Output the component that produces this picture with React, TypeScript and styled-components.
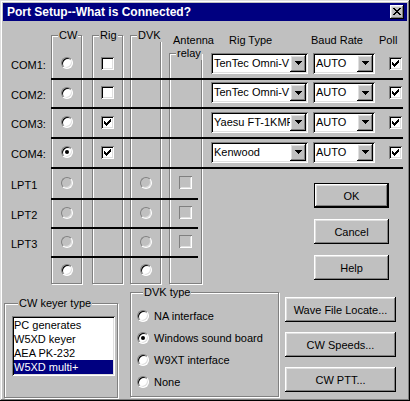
import React from 'react';
import styled, { createGlobalStyle, css } from 'styled-components';

// grid column indices of the port matrix
const COL = { label: 1, cw: 2, rig: 4, dvk: 6, ant: 8, type: 10, baud: 12, poll: 14 };

type ComPort = { name: string; cw: boolean; rig: boolean; rigType: string };

const comPorts: ComPort[] = [
  { name: 'COM1:', cw: false, rig: false, rigType: 'TenTec Omni-V' },
  { name: 'COM2:', cw: false, rig: false, rigType: 'TenTec Omni-V' },
  { name: 'COM3:', cw: false, rig: true, rigType: 'Yaesu FT-1KMP' },
  { name: 'COM4:', cw: true, rig: true, rigType: 'Kenwood' },
];
const lptPorts = ['LPT1', 'LPT2', 'LPT3'];
const keyerTypes = ['PC generates', 'W5XD keyer', 'AEA PK-232', 'W5XD multi+'];
const dvkTypes = ['NA interface', 'Windows sound board', 'W9XT interface', 'None'];

const raised = css`
  box-shadow: inset -1px -1px #000, inset 1px 1px #fff, inset -2px -2px #808080,
    inset 2px 2px #dfdfdf;
`;

const sunken = css`
  box-shadow: inset 1px 1px #808080, inset -1px -1px #fff, inset 2px 2px #000,
    inset -2px -2px #dfdfdf;
`;

const GlobalStyle = createGlobalStyle`
  html, body {
    margin: 0;
    padding: 0;
    background: #c0c0c0;
  }
  body {
    font-family: "Liberation Sans", Arial, sans-serif;
    font-size: 11px;
    color: #000;
  }
`;

const CloseIcon: React.FC = () => (
  <svg width="8" height="7" viewBox="0 0 8 7" shapeRendering="crispEdges">
    <path
      d="M0 0h2v1h-2z M6 0h2v1h-2z M1 1h2v1h-2z M5 1h2v1h-2z M2 2h4v1h-4z M3 3h2v1h-2z M2 4h4v1h-4z M1 5h2v1h-2z M5 5h2v1h-2z M0 6h2v1h-2z M6 6h2v1h-2z"
      fill="#000"
    />
  </svg>
);

const CheckMark: React.FC = () => (
  <svg width="7" height="7" viewBox="0 0 7 7" shapeRendering="crispEdges">
    <path
      d="M6 0h1v1h-1z M5 1h2v1h-2z M0 2h1v1h-1z M4 2h3v1h-3z M0 3h2v1h-2z M3 3h3v1h-3z M0 4h5v1h-5z M1 5h3v1h-3z M2 6h1v1h-1z"
      fill="#000"
    />
  </svg>
);

const DownArrow: React.FC = () => (
  <svg width="7" height="4" viewBox="0 0 7 4" shapeRendering="crispEdges">
    <path d="M0 0h7v1h-7z M1 1h5v1h-5z M2 2h3v1h-3z M3 3h1v1h-1z" fill="#000" />
  </svg>
);

const CheckBox: React.FC<{ checked?: boolean; disabled?: boolean }> = ({ checked, disabled }) => (
  <Box $disabled={disabled}>{checked && <CheckMark />}</Box>
);

const Combo: React.FC<{ value: string }> = ({ value }) => (
  <ComboField>
    <ComboText>{value}</ComboText>
    <DropButton>
      <DownArrow />
    </DropButton>
  </ComboField>
);

const App: React.FC = () => (
  <>
    <GlobalStyle />
    <Window>
      <TitleBar>
        <Title>Port Setup--What is Connected?</Title>
        <CloseButton aria-label="Close">
          <CloseIcon />
        </CloseButton>
      </TitleBar>
      <Body>
        <Matrix>
          <Column $col={COL.cw} $top={3}>
            <Legend>CW</Legend>
          </Column>
          <Column $col={COL.rig} $top={3}>
            <Legend>Rig</Legend>
          </Column>
          <Column $col={COL.dvk} $top={3}>
            <Legend $overhang>DVK</Legend>
          </Column>
          <Column $col={COL.ant} $top={21}>
            <Legend>relay</Legend>
          </Column>

          <HeaderText $col={COL.ant} $indent={4}>Antenna</HeaderText>
          <HeaderText $col={COL.type} $indent={18}>Rig Type</HeaderText>
          <HeaderText $col={COL.baud} $indent={-2}>Baud Rate</HeaderText>
          <HeaderText $col={COL.poll - 1} $indent={4}>Poll</HeaderText>

          {comPorts.map((port, i) => {
            const row = 2 + i * 2;
            return (
              <React.Fragment key={port.name}>
                <PortLabel $row={row}>{port.name}</PortLabel>
                <Cell $col={COL.cw} $row={row}>
                  <Radio $checked={port.cw} />
                </Cell>
                <Cell $col={COL.rig} $row={row}>
                  <CheckBox checked={port.rig} />
                </Cell>
                <Cell $col={COL.type} $row={row}>
                  <Combo value={port.rigType} />
                </Cell>
                <Cell $col={COL.baud} $row={row}>
                  <Combo value="AUTO" />
                </Cell>
                <Cell $col={COL.poll} $row={row}>
                  <CheckBox checked />
                </Cell>
                <Rule $row={row + 1} />
              </React.Fragment>
            );
          })}

          {lptPorts.map((name, i) => {
            const row = 10 + i * 2;
            return (
              <React.Fragment key={name}>
                <PortLabel $row={row}>{name}</PortLabel>
                <Cell $col={COL.cw} $row={row}>
                  <Radio $disabled />
                </Cell>
                <Cell $col={COL.dvk} $row={row}>
                  <Radio $disabled />
                </Cell>
                <Cell $col={COL.ant} $row={row}>
                  <CheckBox disabled />
                </Cell>
                <Rule $row={row + 1} $short />
              </React.Fragment>
            );
          })}

          <Cell $col={COL.cw} $row={16}>
            <Radio />
          </Cell>
          <Cell $col={COL.dvk} $row={16}>
            <Radio />
          </Cell>

          <ButtonStack>
            <DialogButton $default>OK</DialogButton>
            <DialogButton>Cancel</DialogButton>
            <DialogButton>Help</DialogButton>
          </ButtonStack>
        </Matrix>

        <BottomRow>
          <KeyerGroup>
            <Legend>CW keyer type</Legend>
            <ListBox>
              {keyerTypes.map((item) => (
                <ListItem key={item} $selected={item === 'W5XD multi+'}>
                  {item}
                </ListItem>
              ))}
            </ListBox>
          </KeyerGroup>
          <DvkGroup>
            <Legend>DVK type</Legend>
            {dvkTypes.map((item) => (
              <Option key={item}>
                <Radio $checked={item === 'Windows sound board'} />
                {item}
              </Option>
            ))}
          </DvkGroup>
          <SideButtons>
            <SideButton>Wave File Locate...</SideButton>
            <SideButton>CW Speeds...</SideButton>
            <SideButton>CW PTT...</SideButton>
          </SideButtons>
        </BottomRow>
      </Body>
    </Window>
  </>
);

const Window = styled.div`
  width: 410px;
  height: 401px;
  box-sizing: border-box;
  padding: 3px;
  background: #c0c0c0;
  box-shadow: inset -1px -1px #000, inset 1px 1px #dfdfdf, inset -2px -2px #808080,
    inset 2px 2px #fff;
  display: flex;
  flex-direction: column;
`;

const TitleBar = styled.div`
  height: 18px;
  background: #000080;
  color: #fff;
  display: flex;
  align-items: center;
  justify-content: space-between;
  padding: 0 3px 0 4px;
`;

const Title = styled.span`
  font-weight: bold;
  font-size: 12px;
  white-space: nowrap;
`;

const CloseButton = styled.span`
  width: 14px;
  height: 14px;
  background: #c0c0c0;
  ${raised};
  display: flex;
  align-items: center;
  justify-content: center;
  padding-bottom: 1px;
  box-sizing: border-box;
`;

const Body = styled.div`
  padding: 5px 3px 0 1px;
  display: flex;
  flex-direction: column;
`;

const Matrix = styled.div`
  display: grid;
  grid-template-columns: 47px 31px 10px 31px 7px 31px 8px 33px 9px 97px 5px 62px 14px 13px 2px;
  grid-template-rows: 24px 28px 2px 27px 2px 28px 2px 28px 2px 29px 2px 27px 2px 27px 2px 26px;
`;

const GroupBox = styled.fieldset`
  margin: 0;
  padding: 0;
  min-width: 0;
  border: 1px solid #808080;
  box-shadow: inset 1px 1px #fff, 1px 1px #fff;
`;

const Column = styled(GroupBox)<{ $col: number; $top: number }>`
  grid-column: ${({ $col }) => $col};
  grid-row: 1 / -1;
  margin-top: ${({ $top }) => $top}px;
`;

const Legend = styled.legend<{ $overhang?: boolean }>`
  margin-left: 6px;
  margin-right: ${({ $overhang }) => ($overhang ? -4 : 0)}px;
  padding: 0 ${({ $overhang }) => ($overhang ? 3 : 1)}px 0 1px;
  line-height: 13px;
  white-space: nowrap;
  background: #c0c0c0;
`;

const HeaderText = styled.div<{ $col: number; $indent: number }>`
  grid-column: ${({ $col }) => $col};
  grid-row: 1;
  align-self: start;
  justify-self: start;
  margin: 8px 0 0 ${({ $indent }) => $indent}px;
  line-height: 13px;
  white-space: nowrap;
`;

const Cell = styled.div<{ $col: number; $row: number }>`
  grid-column: ${({ $col }) => $col};
  grid-row: ${({ $row }) => $row};
  display: flex;
  align-items: center;
  justify-content: center;
  padding-bottom: 2px;
`;

const PortLabel = styled.div<{ $row: number }>`
  grid-column: ${COL.label};
  grid-row: ${({ $row }) => $row};
  display: flex;
  align-items: center;
  padding: 2px 0 0 7px;
  white-space: nowrap;
`;

const Rule = styled.div<{ $row: number; $short?: boolean }>`
  grid-row: ${({ $row }) => $row};
  grid-column: ${({ $short }) => ($short ? '2 / 9' : '2 / 16')};
  margin-right: ${({ $short }) => ($short ? 4 : 1)}px;
  background: #000;
`;

const Radio = styled.span<{ $checked?: boolean; $disabled?: boolean }>`
  flex: none;
  width: 12px;
  height: 12px;
  box-sizing: border-box;
  border-radius: 50%;
  border: 1px solid;
  border-color: #808080 #fff #fff #808080;
  background: ${({ $disabled }) => ($disabled ? '#c0c0c0' : '#fff')};
  box-shadow: inset 1px 1px ${({ $disabled }) => ($disabled ? '#c0c0c0' : '#000')},
    inset -1px -1px #dfdfdf;
  display: inline-flex;
  align-items: center;
  justify-content: center;

  &::after {
    content: '';
    display: ${({ $checked }) => ($checked ? 'block' : 'none')};
    width: 4px;
    height: 4px;
    border-radius: 50%;
    background: #000;
  }
`;

const Box = styled.span<{ $disabled?: boolean }>`
  flex: none;
  width: 13px;
  height: 13px;
  box-sizing: border-box;
  background: ${({ $disabled }) => ($disabled ? '#c0c0c0' : '#fff')};
  box-shadow: inset 1px 1px #808080, inset -1px -1px #fff,
    inset 2px 2px ${({ $disabled }) => ($disabled ? '#c0c0c0' : '#000')}, inset -2px -2px #dfdfdf;
  display: inline-flex;
  align-items: center;
  justify-content: center;
`;

const ComboField = styled.div`
  width: 100%;
  height: 21px;
  box-sizing: border-box;
  padding: 2px;
  background: #fff;
  ${sunken};
  display: flex;
`;

const ComboText = styled.span`
  flex: 1;
  min-width: 0;
  overflow: hidden;
  white-space: nowrap;
  padding-left: 1px;
  line-height: 17px;
`;

const DropButton = styled.span`
  flex: none;
  width: 16px;
  background: #c0c0c0;
  ${raised};
  display: flex;
  align-items: center;
  justify-content: center;
`;

const ButtonStack = styled.div`
  grid-column: 12 / 15;
  grid-row: 10 / -1;
  display: flex;
  flex-direction: column;
  gap: 11px;
  padding: 14px 0 0 1px;
`;

const DialogButton = styled.button<{ $default?: boolean }>`
  width: 75px;
  height: 25px;
  box-sizing: border-box;
  padding: 0;
  font: inherit;
  color: #000;
  background: #c0c0c0;
  border: ${({ $default }) => ($default ? '1px solid #000' : 'none')};
  ${raised};
`;

const BottomRow = styled.div`
  display: flex;
  align-items: flex-start;
`;

const KeyerGroup = styled(GroupBox)`
  width: 114px;
  height: 101px;
  box-sizing: border-box;
  margin-top: 13px;
  padding: 6px 2px 0 7px;
`;

const ListBox = styled.div`
  height: 60px;
  box-sizing: border-box;
  padding: 2px;
  background: #fff;
  ${sunken};
`;

const ListItem = styled.div<{ $selected?: boolean }>`
  height: 14px;
  line-height: 14px;
  white-space: nowrap;
  background: ${({ $selected }) => ($selected ? '#000080' : 'transparent')};
  color: ${({ $selected }) => ($selected ? '#fff' : '#000')};
`;

const DvkGroup = styled(GroupBox)`
  width: 149px;
  height: 111px;
  box-sizing: border-box;
  margin: 2px 0 0 12px;
  padding: 6px 0 0 6px;
`;

const Option = styled.div`
  height: 22px;
  display: flex;
  align-items: center;
  gap: 5px;
  white-space: nowrap;
`;

const SideButtons = styled.div`
  margin: 13px 0 0 6px;
  display: flex;
  flex-direction: column;
  gap: 10px;
`;

const SideButton = styled(DialogButton)`
  width: 111px;
`;

export default App;
